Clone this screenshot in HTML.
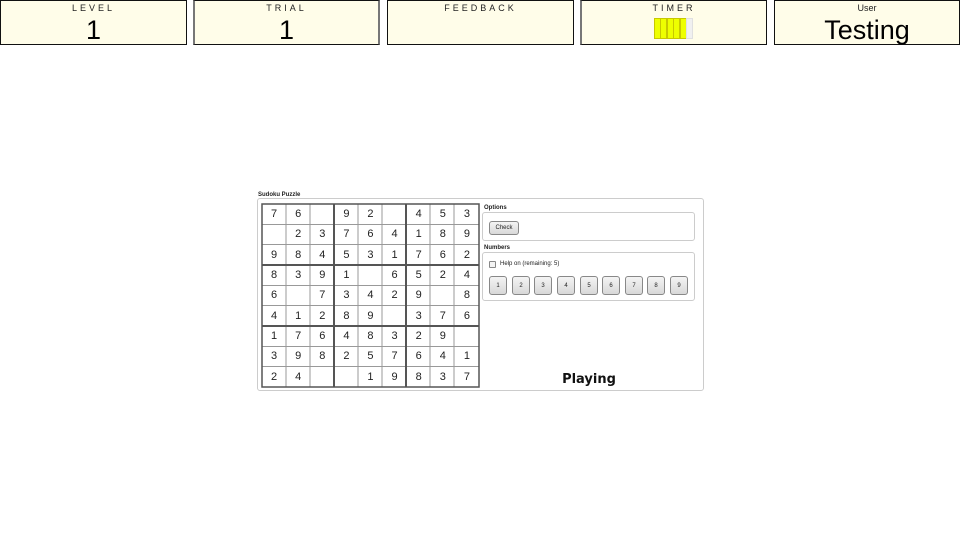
<!DOCTYPE html>
<html><head><meta charset="utf-8"><style>
*{margin:0;padding:0;box-sizing:border-box}
body{width:960px;height:540px;background:#fff;font-family:"Liberation Sans",Arial,sans-serif;position:relative;overflow:hidden}
.tb{position:absolute;top:0;height:45px;background:#fffde9;border:1px solid #111;text-align:center}
.tb .l{font-size:9px;letter-spacing:3px;color:#222;margin-top:2px;line-height:10px}
.tb .v{font-size:27px;line-height:30px;color:#000;margin-top:2px}
.abs{position:absolute}
#grid{position:absolute;left:262px;top:204px;width:217px;height:183px;display:grid;grid-template-columns:repeat(9,1fr);grid-template-rows:repeat(9,1fr);font-size:11px;color:#222}
#grid div{display:flex;align-items:center;justify-content:center}
.fs{position:absolute;border:1px solid #ccc;border-radius:3px;background:#fff}
.lab{position:absolute;font-size:6px;font-weight:bold;color:#222}
.btn{position:absolute;width:18px;height:19px;border:1px solid #888;border-radius:3px;background:linear-gradient(#f4f4f4,#d8d8d8);font-size:6px;display:flex;align-items:center;justify-content:center;color:#222}
</style></head><body>
<div class="tb" style="left:0;width:187px"><div class="l">LEVEL</div><div class="v">1</div></div>
<div class="tb" style="left:193px;width:187px;border-left:2px solid #777;border-right:2px solid #777"><div class="l">TRIAL</div><div class="v">1</div></div>
<div class="tb" style="left:387px;width:187px"><div class="l">FEEDBACK</div></div>
<div class="tb" style="left:580px;width:187px;border-left:2px solid #777"><div class="l">TIMER</div></div>
<div class="tb" style="left:774px;width:186px"><div class="l" style="letter-spacing:0;font-size:9px">User</div><div class="v">Testing</div></div>
<svg class="abs" style="left:0;top:0" width="960" height="45">
<g stroke="#c8c800" stroke-width="1" fill="#eeff00">
<rect x="654.5" y="18.5" width="6" height="20"/><rect x="660.5" y="18.5" width="6" height="20"/><rect x="667.5" y="18.5" width="6" height="20"/><rect x="673.5" y="18.5" width="6" height="20"/><rect x="680.5" y="18.5" width="6" height="20"/>
</g><rect x="686.5" y="18.5" width="6" height="20" fill="#f0f0f0" stroke="#e0e0e0"/>
</svg>

<div class="lab" style="left:258px;top:192px">Sudoku Puzzle</div>
<div class="abs" style="left:257px;top:198px;width:447px;height:193px;border:1px solid #ccc;border-radius:3px"></div>

<svg class="abs" style="left:261px;top:203px" width="220" height="186">
<rect x="1" y="1" width="217" height="183" fill="#fff"/>
<g stroke="#999" stroke-width="1">
<line x1="25" y1="1" x2="25" y2="184"/><line x1="49" y1="1" x2="49" y2="184"/><line x1="97" y1="1" x2="97" y2="184"/><line x1="121" y1="1" x2="121" y2="184"/><line x1="169" y1="1" x2="169" y2="184"/><line x1="193" y1="1" x2="193" y2="184"/>
<line x1="1" y1="21.5" x2="218" y2="21.5"/><line x1="1" y1="41.5" x2="218" y2="41.5"/><line x1="1" y1="82.5" x2="218" y2="82.5"/><line x1="1" y1="102.5" x2="218" y2="102.5"/><line x1="1" y1="143.5" x2="218" y2="143.5"/><line x1="1" y1="163.5" x2="218" y2="163.5"/>
</g>
<g stroke="#555" stroke-width="2" fill="none">
<line x1="73" y1="1" x2="73" y2="184"/><line x1="145" y1="1" x2="145" y2="184"/>
<line x1="1" y1="62" x2="218" y2="62"/><line x1="1" y1="123" x2="218" y2="123"/>
<rect x="1" y="1" width="217" height="183" stroke-width="1.5"/>
</g></svg>
<div id="grid">
<div>7</div><div>6</div><div></div><div>9</div><div>2</div><div></div><div>4</div><div>5</div><div>3</div>
<div></div><div>2</div><div>3</div><div>7</div><div>6</div><div>4</div><div>1</div><div>8</div><div>9</div>
<div>9</div><div>8</div><div>4</div><div>5</div><div>3</div><div>1</div><div>7</div><div>6</div><div>2</div>
<div>8</div><div>3</div><div>9</div><div>1</div><div></div><div>6</div><div>5</div><div>2</div><div>4</div>
<div>6</div><div></div><div>7</div><div>3</div><div>4</div><div>2</div><div>9</div><div></div><div>8</div>
<div>4</div><div>1</div><div>2</div><div>8</div><div>9</div><div></div><div>3</div><div>7</div><div>6</div>
<div>1</div><div>7</div><div>6</div><div>4</div><div>8</div><div>3</div><div>2</div><div>9</div><div></div>
<div>3</div><div>9</div><div>8</div><div>2</div><div>5</div><div>7</div><div>6</div><div>4</div><div>1</div>
<div>2</div><div>4</div><div></div><div></div><div>1</div><div>9</div><div>8</div><div>3</div><div>7</div>
</div>

<div class="lab" style="left:484px;top:205px">Options</div>
<div class="fs" style="left:482px;top:212px;width:213px;height:29px"></div>
<div class="btn" style="left:489px;top:221px;width:30px;height:14px">Check</div>
<div class="lab" style="left:484px;top:245px">Numbers</div>
<div class="fs" style="left:482px;top:252px;width:213px;height:49px"></div>
<div class="abs" style="left:489px;top:261px;width:7px;height:7px;border:1px solid #888;border-radius:1px;background:#f4f4f4"></div>
<div class="abs" style="left:500px;top:261px;font-size:6px;color:#222">Help on (remaining: 5)</div>
<div class="btn" style="left:489px;top:276px">1</div>
<div class="btn" style="left:512px;top:276px">2</div>
<div class="btn" style="left:534px;top:276px">3</div>
<div class="btn" style="left:557px;top:276px">4</div>
<div class="btn" style="left:580px;top:276px">5</div>
<div class="btn" style="left:602px;top:276px">6</div>
<div class="btn" style="left:625px;top:276px">7</div>
<div class="btn" style="left:647px;top:276px">8</div>
<div class="btn" style="left:670px;top:276px">9</div>
<div class="abs" style="left:540px;top:372px;width:98px;text-align:center;font-size:13px;font-weight:bold;color:#111;font-family:'DejaVu Sans',sans-serif">Playing</div>
</body></html>
